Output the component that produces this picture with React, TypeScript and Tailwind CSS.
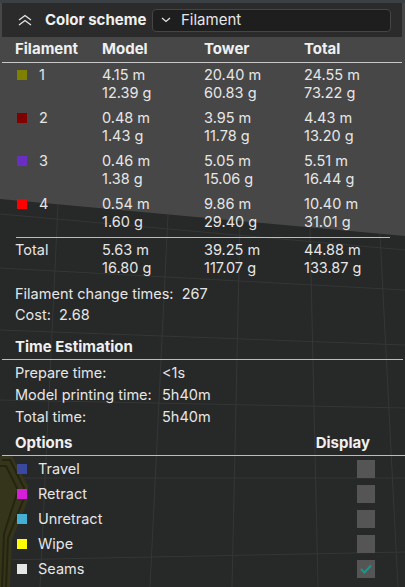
const filaments = [
  { id: '1', color: 'bg-[#808000]', model: ['4.15 m', '12.39 g'], tower: ['20.40 m', '60.83 g'], total: ['24.55 m', '73.22 g'] },
  { id: '2', color: 'bg-[#800000]', model: ['0.48 m', '1.43 g'], tower: ['3.95 m', '11.78 g'], total: ['4.43 m', '13.20 g'] },
  { id: '3', color: 'bg-[#6a2fc2]', model: ['0.46 m', '1.38 g'], tower: ['5.05 m', '15.06 g'], total: ['5.51 m', '16.44 g'] },
  { id: '4', color: 'bg-[#ff0000]', model: ['0.54 m', '1.60 g'], tower: ['9.86 m', '29.40 g'], total: ['10.40 m', '31.01 g'] },
]

const options = [
  { name: 'Travel', color: 'bg-[#3a48a0]', checked: false },
  { name: 'Retract', color: 'bg-[#d41ed8]', checked: false },
  { name: 'Unretract', color: 'bg-[#44b0d6]', checked: false },
  { name: 'Wipe', color: 'bg-[#ffff00]', checked: false },
  { name: 'Seams', color: 'bg-[#e6e6e6]', checked: true },
]

function Viewport() {
  // the 3d scene behind the translucent panel
  return (
    <svg className="absolute inset-0" width="405" height="587" viewBox="0 0 405 587">
      <rect width="405" height="587" fill="#272828" />
      <polygon points="0,0 405,0 405,236 0,199" fill="#474747" />
      <rect x="0" y="0" width="405" height="3" fill="#3b4045" />
      <g stroke="#353636" strokeWidth="1" fill="none">
        <line x1="0" y1="214" x2="405" y2="250" />
        <line x1="0" y1="268" x2="405" y2="290" />
        <line x1="0" y1="330" x2="405" y2="345" />
        <line x1="0" y1="400" x2="405" y2="408" />
        <line x1="0" y1="478" x2="405" y2="478" />
        <line x1="0" y1="560" x2="405" y2="552" />
        <line x1="58" y1="205" x2="40" y2="587" />
        <line x1="168" y1="215" x2="150" y2="587" />
        <line x1="240" y1="222" x2="232" y2="587" />
        <line x1="310" y1="228" x2="318" y2="587" />
        <line x1="380" y1="234" x2="398" y2="587" />
      </g>
      <path d="M0 456 L12 456 L28 486 L28 500 L12 540 L10 587 L0 587 Z" fill="#35351c" />
      <path d="M2 460 L10 460 L24 488 L24 498 L8 538 L6 587" stroke="#24240f" strokeWidth="2" fill="none" />
      <path d="M0 466 L6 466 L18 490 L4 534 L2 587" stroke="#24240f" strokeWidth="2" fill="none" />
    </svg>
  )
}

function Cell({ lines }: { lines: string[] }) {
  return (
    <div className="flex flex-col">
      {lines.map((l) => (
        <span key={l}>{l}</span>
      ))}
    </div>
  )
}

export default function App() {
  return (
    <div className="relative w-[405px] h-[587px] overflow-hidden font-['Inter',sans-serif] text-[14.5px] text-[#e6e6e6]">
      <Viewport />
      <div className="relative mt-[3px] ml-[2px] w-[400px] flex flex-col">
        {/* header */}
        <div className="h-[34px] bg-[#2b2b2b] flex items-center">
          <svg className="ml-[15px]" width="16" height="12" viewBox="0 0 16 12" fill="none" stroke="#e6e6e6" strokeWidth="1.3">
            <path d="M2 6 L8 1.5 L14 6" />
            <path d="M2 11 L8 6.5 L14 11" />
          </svg>
          <span className="ml-[12px] text-[15px] font-bold text-[#f0f0f0]">Color scheme</span>
          <div className="ml-auto mr-[11px] w-[239px] h-[23px] rounded-[4px] bg-[#1e1e1e] border border-[#454545] flex items-center">
            <svg className="ml-[8px]" width="10" height="6" viewBox="0 0 10 6" fill="none" stroke="#e6e6e6" strokeWidth="1.2">
              <path d="M1 1 L5 4.5 L9 1" />
            </svg>
            <span className="ml-[10px] text-[15px]">Filament</span>
          </div>
        </div>

        {/* filament table */}
        <div className="grid grid-cols-[87px_102px_100px_1fr] pl-[13px] h-[25px] items-center text-[15px] font-bold text-[#f0f0f0]">
          <span>Filament</span>
          <span>Model</span>
          <span>Tower</span>
          <span>Total</span>
        </div>
        <div className="h-px bg-[#c8c8c8]" />
        <div className="flex flex-col gap-[7px] pt-[3px] leading-[18px]">
          {filaments.map((f) => (
            <div key={f.id} className="grid grid-cols-[87px_102px_100px_1fr] pl-[13px]">
              <div className="flex items-start">
                <span className={`mt-[4px] ml-[2px] w-[10px] h-[10px] ${f.color}`} />
                <span className="ml-[12px]">{f.id}</span>
              </div>
              <Cell lines={f.model} />
              <Cell lines={f.tower} />
              <Cell lines={f.total} />
            </div>
          ))}
        </div>
        <div className="mt-[6px] ml-[14px] w-[374px] h-px bg-[#bdbdbd]" />
        <div className="mt-[3px] grid grid-cols-[87px_102px_100px_1fr] pl-[13px] leading-[18px]">
          <span>Total</span>
          <Cell lines={['5.63 m', '16.80 g']} />
          <Cell lines={['39.25 m', '117.07 g']} />
          <Cell lines={['44.88 m', '133.87 g']} />
        </div>

        <div className="mt-[6px] pl-[13px] leading-[21px]">
          <div>Filament change times:&nbsp; 267</div>
          <div>Cost:&nbsp; 2.68</div>
        </div>

        {/* time estimation */}
        <div className="mt-[11px] pl-[13px] leading-[21px] text-[15px] font-bold text-[#f0f0f0]">Time Estimation</div>
        <div className="mt-[2px] w-[401px] h-px bg-[#bdbdbd]" />
        <div className="mt-[2px] pl-[13px] leading-[22px] grid grid-cols-[147px_1fr]">
          <span>Prepare time:</span>
          <span>&lt;1s</span>
          <span>Model printing time:</span>
          <span>5h40m</span>
          <span>Total time:</span>
          <span>5h40m</span>
        </div>

        {/* options */}
        <div className="mt-[4px] pl-[13px] pr-[32px] leading-[22px] flex justify-between text-[15px] font-bold text-[#f0f0f0]">
          <span>Options</span>
          <span>Display</span>
        </div>
        <div className="mt-[1px] w-[403px] h-px bg-[#bdbdbd]" />
        <div className="flex flex-col">
          {options.map((o) => (
            <div key={o.name} className="h-[25px] flex items-center pl-[15px] pr-[27px]">
              <span className={`w-[10px] h-[10px] ${o.color}`} />
              <span className="ml-[11px] flex-1">{o.name}</span>
              <span className="w-[18px] h-[18px] bg-[#555555] flex items-center justify-center">
                {o.checked && (
                  <svg width="12" height="10" viewBox="0 0 12 10" fill="none" stroke="#0e9a8c" strokeWidth="2.2">
                    <path d="M1 5 L4.5 8.5 L11 1.5" />
                  </svg>
                )}
              </span>
            </div>
          ))}
        </div>
      </div>
    </div>
  )
}
